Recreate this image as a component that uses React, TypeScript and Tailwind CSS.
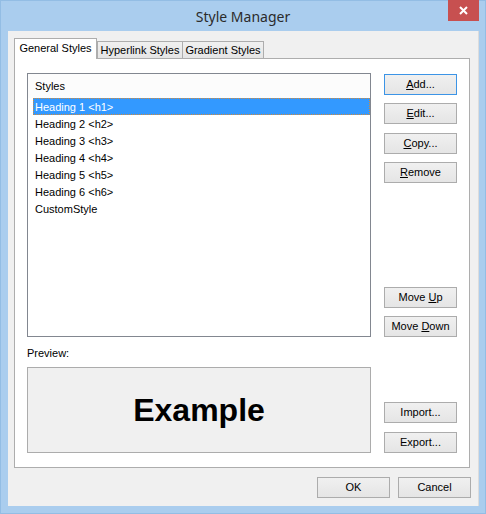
const styles = [
  'Heading 1 <h1>',
  'Heading 2 <h2>',
  'Heading 3 <h3>',
  'Heading 4 <h4>',
  'Heading 5 <h5>',
  'Heading 6 <h6>',
  'CustomStyle',
];

function Btn({
  children,
  className = '',
  isDefault = false,
}: {
  children: React.ReactNode;
  className?: string;
  isDefault?: boolean;
}) {
  return (
    <button
      className={`flex items-center justify-center w-[73px] h-[21px] border bg-linear-to-b from-[#f0f0f0] to-[#e5e5e5] text-[11px] leading-none text-black ${
        isDefault ? 'border-[#3c94e6]' : 'border-[#acacac]'
      } ${className}`}
    >
      {children}
    </button>
  );
}

export default function App() {
  return (
    <div className="relative w-[486px] h-[514px] bg-[#aacdee] border border-[#93bde4] flex flex-col font-['Liberation_Sans',Arial,sans-serif] text-[11px] text-black">
      {/* title bar */}
      <div className="h-[30px] flex items-center justify-center">
        <span className="font-['Noto_Sans',sans-serif] text-[14px] text-[#2b2b2b] mt-[1px]">Style Manager</span>
      </div>
      <div className="absolute top-[-1px] right-[6px] w-[31px] h-[21px] bg-[#c75050] flex items-center justify-center">
        <svg width="9" height="9" viewBox="0 0 9 9">
          <path d="M1 1L8 8M8 1L1 8" stroke="white" strokeWidth="2" />
        </svg>
      </div>

      {/* client area */}
      <div className="ml-[7px] mr-[6px] mb-[7px] flex-1 bg-[#f0f0f0] border-r border-[#dcdcdc] pl-[6px] pr-[7px] pt-[7px] flex flex-col">
        {/* tabs */}
        <div className="flex items-end h-[20px]">
          <div className="relative z-10 -mb-px h-[21px] w-[83px] bg-white border border-b-0 border-[#adadad] flex items-center justify-center pb-[1px]">
            General Styles
          </div>
          <div className="h-[17px] w-[86px] border border-b-0 border-[#adadad] bg-linear-to-b from-[#f0f0f0] to-[#e5e5e5] flex items-center justify-center">
            Hyperlink Styles
          </div>
          <div className="h-[17px] w-[81px] border border-b-0 border-l-0 border-[#adadad] bg-linear-to-b from-[#f0f0f0] to-[#e5e5e5] flex items-center justify-center">
            Gradient Styles
          </div>
        </div>

        {/* panel */}
        <div className="h-[410px] mr-[1px] bg-white border border-[#adadad] pl-[12px] pt-[14px] flex">
          <div className="w-[344px] flex flex-col">
            <div className="h-[264px] border border-[#828790] bg-white flex flex-col">
              <div className="h-[24px] pl-[7px] pt-[1px] flex items-center bg-[#fcfcfc]">Styles</div>
              <div className="ml-[5px] flex flex-col">
                {styles.map((s, i) => (
                  <div
                    key={s}
                    className={`h-[17px] pl-[1px] pt-[1px] flex items-center border ${
                      i === 0
                        ? 'bg-[#3399ff] text-white border-dotted border-[#d08a3c]'
                        : 'border-transparent'
                    }`}
                  >
                    {s}
                  </div>
                ))}
              </div>
            </div>
            <div className="mt-[9px] h-[14px] flex items-center">Preview:</div>
            <div className="mt-[7px] h-[86px] border border-[#acacac] bg-[#f0f0f0] flex items-center justify-center">
              <span className="text-[32px] font-bold leading-none">Example</span>
            </div>
          </div>

          <div className="ml-[13px] w-[73px] flex flex-col">
            <Btn isDefault className="mt-[1px]">
              <span>
                <u>A</u>dd...
              </span>
            </Btn>
            <Btn className="mt-[8px]">
              <span>
                <u>E</u>dit...
              </span>
            </Btn>
            <Btn className="mt-[9px]">
              <span>
                <u>C</u>opy...
              </span>
            </Btn>
            <Btn className="mt-[8px]">
              <span>
                <u>R</u>emove
              </span>
            </Btn>
            <Btn className="mt-[104px]">
              <span>
                Move <u>U</u>p
              </span>
            </Btn>
            <Btn className="mt-[8px]">
              <span>
                Move <u>D</u>own
              </span>
            </Btn>
            <Btn className="mt-[65px]">Import...</Btn>
            <Btn className="mt-[9px]">Export...</Btn>
          </div>
        </div>

        {/* dialog buttons */}
        <div className="mt-[9px] flex justify-end gap-[8px]">
          <Btn className="h-[21px]">OK</Btn>
          <Btn className="h-[21px]">Cancel</Btn>
        </div>
      </div>
    </div>
  );
}
